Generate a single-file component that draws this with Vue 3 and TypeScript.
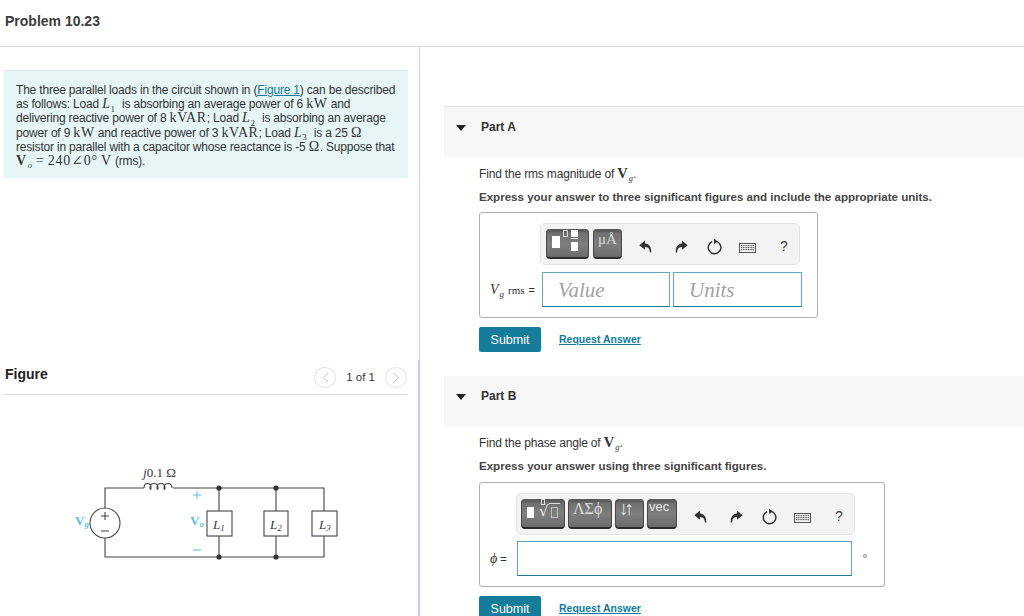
<script setup lang="ts">
const actions = [
  { name: 'undo', width: 36 },
  { name: 'redo', width: 36 },
  { name: 'reset', width: 30 },
  { name: 'keyboard', width: 38 },
  { name: 'help', width: 34 },
]
const keyRows = [0, 1, 2]
const keyCols = [0, 1, 2, 3, 4, 5, 6, 7]
</script>

<template>
  <div class="page">
    <header class="top"><h1>Problem 10.23</h1></header>
    <main class="columns">
      <section class="left">
        <div class="intro">
          The three parallel loads in the circuit shown in (<a>Figure 1</a>) can be described<br />
          as follows: Load <i class="m">L</i><sub class="s">1</sub> is absorbing an average power of 6 <span class="m">kW</span> and<br />
          delivering reactive power of 8 <span class="m">kVAR</span>; Load <i class="m">L</i><sub class="s">2</sub> is absorbing an average<br />
          power of 9 <span class="m">kW</span> and reactive power of 3 <span class="m">kVAR</span>; Load <i class="m">L</i><sub class="s">3</sub> is a 25 <span class="m">Ω</span><br />
          resistor in parallel with a capacitor whose reactance is -5 <span class="m">Ω</span>. Suppose that<br />
          <b class="m">V</b><i class="m sub">o</i> <span class="m wide-m">= 240∠0° V</span> (rms).
        </div>
        <div class="figure-head">
          <h2>Figure</h2>
          <div class="pager">
            <span class="page-btn">
              <svg width="7" height="11" viewBox="0 0 7 11"><path d="M6 1 1.500 5.500 6 10" fill="none" stroke="#c4c4c4" stroke-width="1" /></svg>
            </span>
            <span class="count">1 of 1</span>
            <span class="page-btn">
              <svg width="7" height="11" viewBox="0 0 7 11"><path d="M1 1l4.500 4.500L1 10" fill="none" stroke="#c4c4c4" stroke-width="1" /></svg>
            </span>
          </div>
        </div>
        <svg class="circuit" width="290" height="110" viewBox="60 460 290 110">
          <g fill="none" stroke="#444" stroke-width="1.100">
            <path d="M105 508V488H144M173 488H324V511M324 536V557H105V538" />
            <path d="M144 488c0-6 7-6 7 0c0 2-1 2-1 0c0-6 8-6 8 0c0 2-1 2-1 0c0-6 8-6 8 0c0 2-1 2-1 0c0-6 8-6 8 0" />
            <circle cx="105" cy="523" r="15" />
            <path d="M219 488V511M219 536V557M276 488V511M276 536V557" />
            <rect x="207" y="511" width="25" height="25" />
            <rect x="264" y="511" width="24" height="25" />
            <rect x="312" y="511" width="25" height="25" />
            <path d="M101 516h8M105 512v8M101 531h8" />
          </g>
          <g fill="#333">
            <circle cx="219" cy="488" r="2.600" /><circle cx="276" cy="488" r="2.600" />
            <circle cx="219" cy="557" r="2.600" /><circle cx="276" cy="557" r="2.600" />
          </g>
          <g stroke="#5cbcec" stroke-width="1"><path d="M193 495h8M197 491v8M193 550h8" /></g>
          <g class="c-label">
            <text x="143" y="477"><tspan font-style="italic">j</tspan>0.1 Ω</text>
            <text x="213" y="529" font-style="italic">L<tspan class="c-sub" dy="2">1</tspan></text>
            <text x="270" y="529" font-style="italic">L<tspan class="c-sub" dy="2">2</tspan></text>
            <text x="319" y="529" font-style="italic">L<tspan class="c-sub" dy="2">3</tspan></text>
          </g>
          <g class="c-volt">
            <text x="75" y="525" font-weight="700">V<tspan class="c-sub" dy="2" font-style="italic">g</tspan></text>
            <text x="190" y="525" font-weight="700">V<tspan class="c-sub" dy="2" font-style="italic">o</tspan></text>
          </g>
        </svg>
      </section>

      <section class="right">
        <div class="part-bar first">
          <span class="caret"></span><h3>Part A</h3>
        </div>
        <div class="part-body">
          <p class="question">Find the rms magnitude of <b class="m big">V</b><i class="m sub">g</i>.</p>
          <p class="instruction">Express your answer to three significant figures and include the appropriate units.</p>
          <div class="answer answer-a">
            <div class="toolbar toolbar-a">
              <span class="tool tool-frac">
                <span class="sq big-sq"></span>
                <span class="sq tiny-sq"></span>
                <span class="frac"><span class="sq frac-sq"></span><span class="bar"></span><span class="sq frac-sq"></span></span>
              </span>
              <span class="tool tool-unit">μÅ</span>
              <span class="actions">
                <span v-for="a in actions" :key="a.name" class="action" :style="{ width: a.width + 'px' }">
                  <svg v-if="a.name === 'undo'" width="13" height="13" viewBox="0 0 13 13"><path d="M6 .5 .3 5.200 6 9.800V7c2.500 0 3.900.9 4.600 3.400L11 12.500h1.200C12.800 7.800 10.400 3.700 6 3.500z" fill="#333" /></svg>
                  <svg v-else-if="a.name === 'redo'" width="13" height="13" viewBox="0 0 13 13"><path d="M7 .5l5.700 4.700L7 9.800V7c-2.500 0-3.900.9-4.600 3.400L2 12.500H.8C.2 7.800 2.600 3.700 7 3.500z" fill="#333" /></svg>
                  <svg v-else-if="a.name === 'reset'" class="reset-icon" width="16" height="17" viewBox="0 0 16 17"><path d="M10.200 3.700a6.300 6.300 0 1 1-5-.1" fill="none" stroke="#2d2d2d" stroke-width="1.400" /><path d="M7 .5 10.800 3.400 7.200 6z" fill="#2d2d2d" /></svg>
                  <svg v-else-if="a.name === 'keyboard'" class="key-icon" width="17" height="10" viewBox="0 0 17 10">
                    <rect x=".5" y=".5" width="16" height="9" fill="#f6f6f6" stroke="#555" />
                    <g fill="#666"><template v-for="r in keyRows" :key="r"><rect v-for="c in keyCols" :key="c" :x="2 + c * 1.70" :y="2 + r * 2" width="1.200" height="1.200" /></template></g>
                  </svg>
                  <span v-else class="help">?</span>
                </span>
              </span>
            </div>
            <div class="entry-row entry-a">
              <span class="label"><i class="m">V</i><i class="m sub">g</i><span class="m rms">rms</span> =</span>
              <span class="entry placeholder value">Value</span>
              <span class="entry placeholder units">Units</span>
            </div>
          </div>
          <div class="buttons"><button>Submit</button><a class="request">Request Answer</a></div>
        </div>

        <div class="part-bar second">
          <span class="caret"></span><h3>Part B</h3>
        </div>
        <div class="part-body">
          <p class="question">Find the phase angle of <b class="m big">V</b><i class="m sub">g</i>.</p>
          <p class="instruction">Express your answer using three significant figures.</p>
          <div class="answer answer-b">
            <div class="toolbar toolbar-b">
              <span class="tool tool-root">
                <span class="sq root-sq"></span>
                <span class="radical">√</span>
                <span class="sq-outline"></span>
                <span class="sq-index"></span>
              </span>
              <span class="tool tool-greek">ΛΣϕ</span>
              <span class="tool tool-arrows">↓↑</span>
              <span class="tool tool-vec">vec</span>
              <span class="actions">
                <span v-for="a in actions" :key="a.name" class="action" :style="{ width: a.width + 'px' }">
                  <svg v-if="a.name === 'undo'" width="13" height="13" viewBox="0 0 13 13"><path d="M6 .5 .3 5.200 6 9.800V7c2.500 0 3.900.9 4.600 3.400L11 12.500h1.200C12.800 7.800 10.400 3.700 6 3.500z" fill="#333" /></svg>
                  <svg v-else-if="a.name === 'redo'" width="13" height="13" viewBox="0 0 13 13"><path d="M7 .5l5.700 4.700L7 9.800V7c-2.500 0-3.900.9-4.600 3.400L2 12.500H.8C.2 7.800 2.600 3.700 7 3.500z" fill="#333" /></svg>
                  <svg v-else-if="a.name === 'reset'" class="reset-icon" width="16" height="17" viewBox="0 0 16 17"><path d="M10.200 3.700a6.300 6.300 0 1 1-5-.1" fill="none" stroke="#2d2d2d" stroke-width="1.400" /><path d="M7 .5 10.800 3.400 7.200 6z" fill="#2d2d2d" /></svg>
                  <svg v-else-if="a.name === 'keyboard'" class="key-icon" width="17" height="10" viewBox="0 0 17 10">
                    <rect x=".5" y=".5" width="16" height="9" fill="#f6f6f6" stroke="#555" />
                    <g fill="#666"><template v-for="r in keyRows" :key="r"><rect v-for="c in keyCols" :key="c" :x="2 + c * 1.70" :y="2 + r * 2" width="1.200" height="1.200" /></template></g>
                  </svg>
                  <span v-else class="help">?</span>
                </span>
              </span>
            </div>
            <div class="entry-row entry-b">
              <span class="label"><i class="m">ϕ</i> =</span>
              <span class="entry wide"></span>
              <span class="dot"></span>
            </div>
          </div>
          <div class="buttons"><button>Submit</button><a class="request">Request Answer</a></div>
        </div>
      </section>
    </main>
  </div>
</template>

<style>
html, body { margin: 0; background: #fff; }
</style>

<style scoped>
.page {
  width: 1024px;
  height: 616px;
  overflow: hidden;
  font-family: "Liberation Sans", Arial, sans-serif;
  color: #333;
  font-size: 12px;
  background: #fff;
}
.top { height: 46px; border-bottom: 1px solid #d9d9d9; }
.top h1 { margin: 0; padding: 13px 0 0 5px; font-size: 14px; line-height: 16px; font-weight: 700; color: #3c3c3c; }
.columns { display: flex; height: 569px; }
.left {
  width: 420px;
  flex: none;
  background-image: linear-gradient(#c8d6ea, #c8d6ea), linear-gradient(#c0cfe6, #c0cfe6);
  background-repeat: no-repeat;
  background-size: 1px 313px, 2px 256px;
  background-position: right top, right bottom;
  padding: 23px 10px 0 4px;
  box-sizing: border-box;
}
.intro {
  background: #e6f6f7;
  border-top: 1px solid #d7e6ea;
  padding: 12px 8px 11px 12px;
  width: 404px;
  box-sizing: border-box;
  height: 108px;
  line-height: 14.2px;
  font-size: 12px;
  white-space: nowrap;
  letter-spacing: -0.19px;
}
.intro a { color: #0f7c9e; text-decoration: underline; }
.m { font-family: "Liberation Serif", "DejaVu Serif", serif; }
.intro .m { font-size: 14px; letter-spacing: .6px; line-height: 0; }
.intro .wide-m { letter-spacing: .8px; word-spacing: -1px; }
.s { font-size: 9px; font-family: "Liberation Serif", serif; line-height: 0; margin: 0 4px 0 0; }
.intro .sub, .sub { font-size: 8.500px; position: relative; top: 3px; line-height: 0; margin-left: 1px; }
.big { font-size: 14.500px; }
.figure-head {
  display: flex;
  align-items: center;
  justify-content: space-between;
  margin-top: 186px;
  height: 31px;
  width: 403px;
  padding-left: 1px;
  box-sizing: border-box;
  border-bottom: 1px solid #dcdcdc;
  padding-bottom: 10px;
}
.figure-head h2 { margin: 0; font-size: 14px; font-weight: 700; color: #222; }
.pager { display: flex; align-items: center; gap: 10px; margin-top: 6px; }
.count { font-size: 11.500px; }
.page-btn {
  width: 22px;
  height: 21px;
  border: 1px solid #e5e5e5;
  border-radius: 50%;
  display: flex;
  align-items: center;
  justify-content: center;
  box-sizing: border-box;
}
.circuit { display: block; margin: 65px 0 0 56px; }
.c-label { font-family: "Liberation Serif", serif; font-size: 13px; fill: #3a3a3a; }
.c-volt { font-family: "Liberation Serif", serif; font-size: 13px; fill: #5cbcec; }
.c-sub { font-size: 9px; }
.right { flex: 1; padding: 59px 0 0 24px; min-width: 0; }
.part-bar {
  height: 51px;
  background: #f7f7f7;
  border-top: 1px solid #e3e3e3;
  box-sizing: border-box;
  display: flex;
  align-items: flex-start;
  padding: 13px 0 0 12px;
}
.part-bar.second { border-top: 0; margin-top: 24px; height: 50px; }
.caret {
  width: 0; height: 0;
  border-left: 5px solid transparent;
  border-right: 5px solid transparent;
  border-top: 6px solid #222;
  margin-top: 5px;
}
.part-bar h3 { margin: 0 0 0 15px; font-size: 12px; line-height: 14px; font-weight: 700; color: #333; }
.part-body { padding-left: 35px; }
.question { margin: 8px 0 0; line-height: 16px; height: 16px; font-size: 12px; letter-spacing: -0.17px; }
.question .m { letter-spacing: 0; }
.instruction { margin: 8px 0 0; line-height: 16px; font-size: 11.550px; font-weight: 700; color: #444; }
.answer {
  margin-top: 7px;
  border: 1px solid #b0b0b0;
  border-radius: 3px;
  box-sizing: border-box;
  position: relative;
}
.answer-a { width: 339px; height: 106px; padding: 10px 0 0 60px; }
.answer-b { width: 406px; height: 105px; padding: 10px 0 0 36px; margin-top: 8px; }
.toolbar {
  height: 42px;
  background: #f3f3f3;
  border: 1px solid #e4e4e4;
  border-radius: 5px;
  box-sizing: border-box;
  display: flex;
  align-items: center;
  padding-left: 5px;
  gap: 4px;
}
.toolbar-a { width: 260px; }
.toolbar-b { width: 339px; padding-left: 4px; gap: 3px; }
.toolbar-b .actions { margin-left: 2px; }
.tool {
  height: 30px;
  box-sizing: border-box;
  border-radius: 4px;
  background: linear-gradient(#585858 0, #5e5e5e 10%, #707070 14%, #7e7e7e 55%, #6a6a6a 100%);
  border-bottom: 2px solid #2a2a2a;
  border-left: 1px solid #474747;
  border-right: 1px solid #474747;
  color: #e6e6e6;
  font-family: "Liberation Serif", serif;
  position: relative;
  display: block;
  overflow: hidden;
  flex: none;
}
.tool-frac { width: 43px; }
.tool-unit { width: 29px; font-size: 15px; text-align: center; line-height: 21px; color: #d8d8d8; }
.tool-root { width: 44px; }
.tool-greek { width: 44px; font-size: 16px; padding-left: 4px; line-height: 20px; color: #dcdcdc; }
.tool-arrows { width: 29px; font-size: 19px; text-align: left; padding-left: 3px; line-height: 19px; letter-spacing: -4px; font-family: "Liberation Serif", serif; overflow: visible; }
.tool-vec { width: 30px; font-size: 13px; text-align: left; padding-left: 1px; line-height: 15px; font-family: "Liberation Sans", sans-serif; }
.sq { position: absolute; background: #fff; display: block; }
.big-sq { left: 5px; top: 7px; width: 8px; height: 12px; }
.tiny-sq { left: 16px; top: 1px; width: 3px; height: 5px; background: transparent; border: 1px solid #d8d8d8; }
.frac { position: absolute; left: 24px; top: 1px; width: 7px; }
.frac-sq { position: static; width: 7px; height: 7px; }
.bar { display: block; height: 1px; background: #eee; margin: 1px 0 3px; }
.frac .frac-sq:last-child { height: 9px; }
.root-sq { left: 5px; top: 8px; width: 7px; height: 11px; }
.radical { position: absolute; left: 17px; top: 4px; font-size: 15px; line-height: 16px; color: #e6e6e6; font-family: "DejaVu Sans", sans-serif; }
.sq-outline { position: absolute; left: 29px; top: 8px; width: 5px; height: 9px; border: 1px solid #bdbdbd; }
.sq-outline::before { content: ""; position: absolute; left: -3px; right: -3px; top: -5px; height: 1px; background: #ddd; }
.sq-index { position: absolute; left: 19px; top: 0; width: 2px; height: 4px; border: 1px solid #ddd; }
.actions { display: flex; align-items: center; margin-left: 1px; margin-top: 4px; }
.action { display: flex; align-items: center; justify-content: center; height: 30px; flex: none; }
.reset-icon { margin-left: 2px; }
.key-icon { margin: 4px 1px 0 0; }
.help { font-size: 14px; color: #444; }
.entry-row { display: flex; align-items: center; }
.entry-a { margin: 7px 0 0 -50px; }
.entry-b { margin: 6px 0 0 -26px; }
.label { font-size: 11px; color: #333; white-space: nowrap; }
.entry-a .label { width: 52px; }
.entry-b .label { width: 27px; }
.label .m { font-size: 14px; }
.label .sub { font-size: 9px; }
.label .rms { font-size: 11px; margin: 0 1px 0 4px; }
.entry {
  display: block;
  box-sizing: border-box;
  height: 35px;
  border: 1px solid #1b7a99;
  border-top-color: #5ea8c0;
  border-left-color: #5ea8c0;
  border-right-color: #5ea8c0;
  background: #fff;
}
.placeholder { font: italic 21px/35px "Liberation Serif", serif; color: #a2a2a2; padding-left: 15px; }
.value { width: 128px; margin-right: 3px; }
.units { width: 129px; }
.wide { width: 335px; }
.dot { width: 2px; height: 2px; border: 1px solid #888; border-radius: 50%; margin: 0 0 6px 11px; }
.buttons { display: flex; align-items: center; margin-top: 9px; }
button {
  width: 62px;
  height: 25px;
  background: #167c9c;
  color: #fff;
  border: 0;
  border-radius: 2px;
  font: 12.500px "Liberation Sans", sans-serif;
  padding: 0;
}
.request { margin: -2px 0 0 18px; font-size: 10.500px; font-weight: 700; color: #0f7c9e; text-decoration: underline; }
</style>
